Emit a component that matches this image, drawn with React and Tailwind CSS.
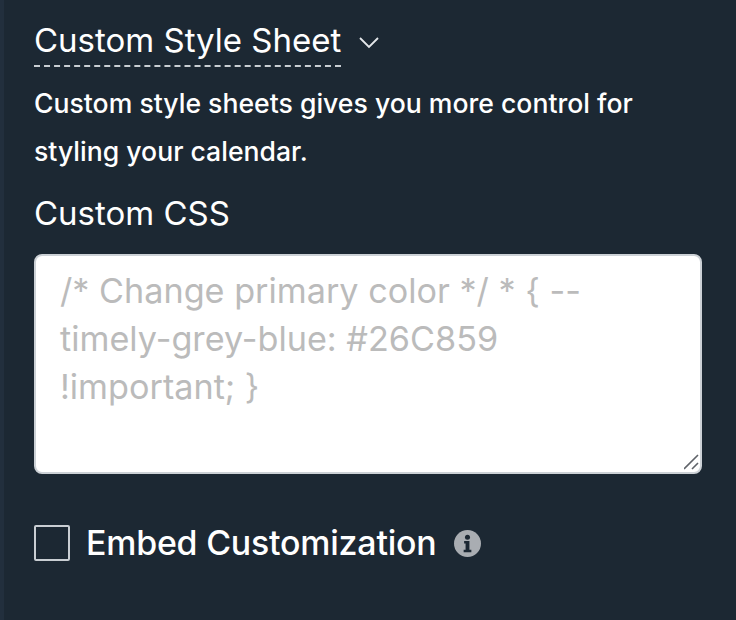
const App = () => {
    return (
        <div className="w-[736px] h-[620px] overflow-hidden bg-[#1c2833] border-l-[4px] border-[#222f3d] text-white pl-[30px] pt-[19px] font-['Inter',sans-serif]">
            <div className="flex items-center">
                <span className="text-[33px] leading-[42px] border-b-2 border-dashed border-[#c9ced3] pb-[4px]">Custom Style Sheet</span>
                <svg className="ml-[18px] w-[20px] h-[12px]" viewBox="0 0 20 12" fill="none" stroke="#e4e7ea" strokeWidth="1.8">
                    <path d="M1 1l9 9 9-9" />
                </svg>
            </div>
            <p className="mt-[12px] text-[26.6px] leading-[48px] font-medium w-[640px]">
                Custom style sheets gives you more control for styling your calendar.
            </p>
            <div className="mt-[17px] text-[33px] leading-[42px]">Custom CSS</div>
            <div className="relative mt-[20px] w-[668px] h-[220px]">
                <textarea
                    className="block w-full h-full resize-none bg-white rounded-[8px] border-2 border-[#ccd1d6] px-[24px] pt-[11px] text-[34.2px] leading-[48px] text-[#333] placeholder:text-[#bbbbbb]"
                    placeholder="/* Change primary color */ * { --timely-grey-blue: #26C859 !important; }"
                />
                <svg className="absolute right-[2px] bottom-[4px] w-[16px] h-[16px]" viewBox="0 0 16 16" fill="none" stroke="#5f6369" strokeWidth="1.6">
                    <path d="M0 15L14 1M8 15l6-6" />
                </svg>
            </div>
            <div className="mt-[48px] flex items-center">
                <span className="w-[36px] h-[36px] border-2 border-[#c9ced3] rounded-[2px]"></span>
                <span className="ml-[16px] text-[33.9px] leading-[42px] font-medium tracking-[-0.2px]">Embed Customization</span>
                <svg className="ml-[17px] w-[27px] h-[27px]" viewBox="0 0 28 28">
                    <circle cx="14" cy="14" r="14" fill="#a9adb2" />
                    <circle cx="14" cy="7.5" r="2.6" fill="#1c2833" />
                    <path d="M10.5 11.5h5.5v9h2v2.5h-8v-2.5h2v-6.5h-1.5z" fill="#1c2833" />
                </svg>
            </div>
        </div>
    )
}

export default App
